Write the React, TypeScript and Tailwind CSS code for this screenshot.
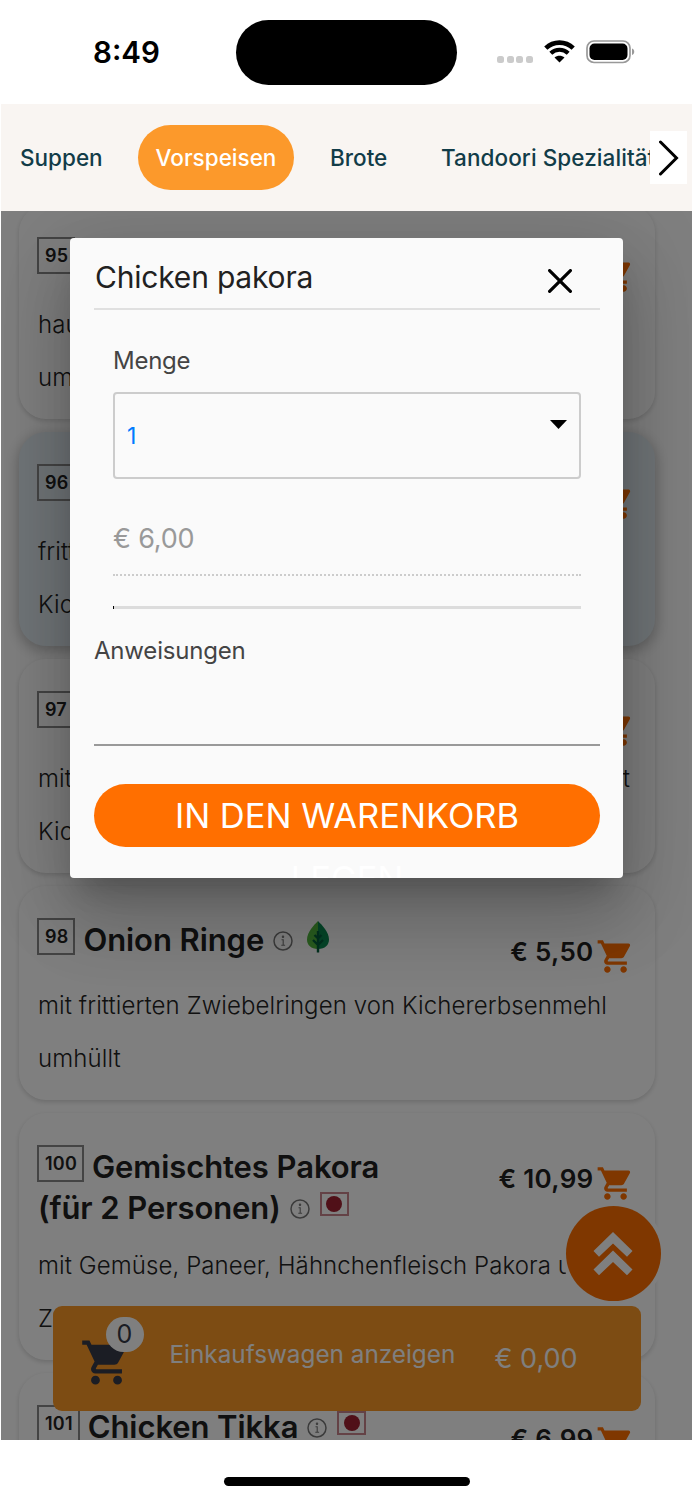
import React from "react";
import { MdShoppingCart } from "react-icons/md";

type Marker = "leaf" | "meat";

interface Dish {
  nr: string;
  title: string[];
  text: React.ReactNode[];
  price: string;
  marker?: Marker;
  highlighted?: boolean;
}

const categories = [
  { name: "Suppen", className: "w-[83px] ml-[19px]" },
  { name: "Vorspeisen", active: true, className: "" },
  { name: "Brote", className: "w-[58px] ml-[36px]" },
  { name: "Tandoori Spezialitäten", className: "ml-[53px] tracking-[0.070px]" },
];

const dishes: Dish[] = [
  { nr: "95", title: [], text: ["hausgemacht", "umhüllt"], price: "" },
  { nr: "96", title: [], text: ["frittiert", "Kichererbsenmehl"], price: "", highlighted: true },
  {
    nr: "97",
    title: [],
    text: [
      <span key="a" className="flex w-[592px] justify-between"><span>mit</span><span>mit</span></span>,
      "Kichererbsenmehl",
    ],
    price: "",
  },
  {
    nr: "98",
    title: ["Onion Ringe"],
    text: ["mit frittierten Zwiebelringen von Kichererbsenmehl", "umhüllt"],
    price: "€ 5,50",
    marker: "leaf",
  },
  {
    nr: "100",
    title: ["Gemischtes Pakora", "(für 2 Personen)"],
    text: ["mit Gemüse, Paneer, Hähnchenfleisch Pakora und", "Zwiebeln"],
    price: "€ 10,99",
    marker: "meat",
  },
  { nr: "101", title: ["Chicken Tikka"], text: ["", ""], price: "€ 6,99", marker: "meat" },
];

function InfoIcon() {
  return (
    <svg className="h-5 w-5 shrink-0" viewBox="0 0 20 20" fill="none" stroke="#777" strokeWidth="1.5">
      <circle cx="10" cy="10" r="9" />
      <path d="M8.500 8.700H10.200V14.300M8.300 14.300H12.100" strokeWidth="1.100" />
      <circle cx="10" cy="5.700" r="0.500" fill="#777" />
    </svg>
  );
}

function LeafIcon() {
  return (
    <svg className="-mt-2 ml-[14px] h-[32px] w-[22px] shrink-0" viewBox="0 0 22 32">
      <path d="M11 0C7 4 0 11 0 18.500C0 24 4 28 11 28Z" fill="#52b83e" />
      <path d="M11 0C15 4 22 11 22 18.500C22 24 18 28 11 28Z" fill="#0a8a50" />
      <path d="M11 10V31.500M11 17.500L7.500 14M11 17.500L14.500 14M11 24L6 19M11 24L16 19" fill="none" stroke="#04603c" strokeWidth="2.400" />
    </svg>
  );
}

function MeatIcon() {
  return (
    <span className="-mt-[9px] ml-[10px] flex h-6 w-[29px] shrink-0 items-center justify-center border-2 border-[#c8848c]">
      <span className="h-4 w-4 rounded-full bg-[#a02030]" />
    </span>
  );
}

function DishCard({ dish }: { dish: Dish }) {
  const lines = dish.title.length ? dish.title : [""];
  return (
    <article
      className={
        dish.highlighted
          ? "w-[636px] shrink-0 rounded-[27px] bg-[#e0ebf1] pt-[34px] pr-[17px] pb-[15px] pl-[19px] shadow-[0_4px_14px_1px_rgba(0,0,0,0.25)]"
          : "w-[636px] shrink-0 rounded-[27px] bg-white pt-[34px] pr-[17px] pb-[15px] pl-[19px] shadow-[0_2px_5px_0_rgba(0,0,0,0.16)]"
      }
    >
      <div className="mb-[10px] flex min-h-[49px] items-start justify-between">
        <h3 className="text-[31px] font-semibold tracking-[-0.080px] text-[#212121]">
          {lines.map((line, i) => (
            <span key={i} className="flex h-[41px] items-center whitespace-nowrap">
              {i === 0 && (
                <span className="-mt-2 mr-2 -ml-px flex h-[37px] items-center border-2 border-[#888] pr-[5px] pl-[6px] text-[18px] tracking-[0.2px] text-[#222]">
                  {dish.nr}
                </span>
              )}
              {line}
              {i === lines.length - 1 && line && (
                <>
                  <span className="w-[9px]" />
                  <InfoIcon />
                  {dish.marker === "leaf" ? <LeafIcon /> : <MeatIcon />}
                </>
              )}
            </span>
          ))}
        </h3>
        <div className="mr-[3px] flex h-[49px] pt-[12px]">
          <span className="mr-[2.500px] pt-px text-[26px] leading-[38px] font-semibold tracking-[0.300px] whitespace-nowrap text-[#212121]">{dish.price}</span>
          <MdShoppingCart className="mt-[5px] h-[39px] w-[39px] text-[#ff6f00]" />
        </div>
      </div>
      <div className="text-[24px] leading-[54px] font-light tracking-[0.090px] whitespace-nowrap text-[#222]">
        {dish.text.map((t, i) => (
          <div key={i} className="h-[53px]">{t}</div>
        ))}
      </div>
    </article>
  );
}

function StatusBar() {
  return (
    <div className="flex h-[104px] shrink-0 items-start bg-white text-black">
      <span className="mt-[32px] ml-[93px] w-[143px] text-[29.500px] leading-[40px] font-semibold">8:49</span>
      <div className="mt-5 h-[65px] w-[221px] rounded-full bg-black" />
      <div className="mt-14 ml-10 flex gap-[2.500px]">
        {[0, 1, 2, 3].map((n) => (
          <span key={n} className="h-[7px] w-[7px] rounded-[2.500px] bg-[#cbcbcb]" />
        ))}
      </div>
      <svg className="mt-10 ml-[11px] h-[23px] w-[31px]" viewBox="0 0 31 23">
        <path d="M1.800 8.200C9.500 0.800 21.500 0.800 29.200 8.200" fill="none" stroke="#000" strokeWidth="4.600" />
        <path d="M6.800 13.200C11.700 8.600 19.300 8.600 24.200 13.200" fill="none" stroke="#000" strokeWidth="4.200" />
        <path d="M15.500 22.500L10.500 17.500C13.200 15.200 17.800 15.200 20.500 17.500Z" fill="#000" />
      </svg>
      <svg className="mt-10 ml-[11px] h-6 w-[50px]" viewBox="0 0 50 24">
        <rect x="1" y="1" width="43" height="21.500" rx="7" fill="none" stroke="#999" strokeWidth="1.700" />
        <rect x="3.500" y="3.500" width="38" height="16.500" rx="5" fill="#000" />
        <path d="M46 8.500C49 9 49 14.500 46 15Z" fill="#999" />
      </svg>
    </div>
  );
}

function CategoryBar() {
  return (
    <nav className="relative mx-px flex h-[107px] shrink-0 items-center overflow-hidden bg-[#f9f5f2] text-[22.500px] font-medium whitespace-nowrap text-[#123c48]">
      {categories.map((c) =>
        c.active ? (
          <span key={c.name} className="ml-[35px] flex h-[65px] w-[156px] shrink-0 items-center justify-center rounded-full bg-[#fc992b] pt-px text-white">
            {c.name}
          </span>
        ) : (
          <span key={c.name} className={c.className + " shrink-0 pt-px"}>{c.name}</span>
        )
      )}
      <button className="absolute top-[27px] right-[5px] flex h-[53px] w-[37px] items-center justify-center bg-white">
        <svg className="h-9 w-5" viewBox="0 0 20 36" fill="none" stroke="#000" strokeWidth="3">
          <path d="M1.500 2L17.500 18L1.500 34" strokeLinecap="round" />
        </svg>
      </button>
    </nav>
  );
}

function AddToCartDialog() {
  return (
    <div className="mt-[27px] h-[640px] w-[553px] overflow-hidden rounded-[4px] bg-[#fafafa] pr-[23px] pl-6 shadow-[0_20px_27px_-12px_rgba(0,0,0,0.2),0_43px_67px_5px_rgba(0,0,0,0.14),0_16px_82px_14px_rgba(0,0,0,0.12)]">
      <header className="flex h-[72px] items-start justify-between border-b-2 border-[#e0e0e0]">
        <h2 className="mt-[19px] ml-px text-[30px] leading-[40px] tracking-[-0.200px] text-[#212121]">Chicken pakora</h2>
        <svg className="mt-[31px] mr-7 h-6 w-6" viewBox="0 0 24 24" stroke="#000" strokeWidth="3.200" strokeLinecap="round">
          <path d="M1.600 1.600L22.400 22.400M22.400 1.600L1.600 22.400" />
        </svg>
      </header>
      <div className="mx-[19px]">
        <div className="pt-[35px] text-[24px] leading-[32px] tracking-[-0.250px] text-[#444]">Menge</div>
        <div className="mt-[15px] flex h-[87px] items-center justify-between rounded-[4px] border-2 border-[#ccc] pr-[12px] pl-3">
          <span className="pt-0.5 text-[23px] text-[#007aff]">1</span>
          <svg className="mb-[23px] h-[9px] w-[17px]" viewBox="0 0 17 9">
            <path d="M0 0H17L8.500 9Z" />
          </svg>
        </div>
        <div className="mt-[40px] h-[57px] border-b-2 border-dotted border-[#ccc] text-[27px] leading-[40px] tracking-[-0.200px] text-[#999]">€ 6,00</div>
        <div className="mt-[30px] h-[3px] border-l border-black bg-[#dcdcdc]" />
      </div>
      <div className="mt-[26px] h-[111px] border-b-2 border-[#999] text-[24px] leading-[32px] tracking-[-0.200px] text-[#444]">Anweisungen</div>
      <button className="mt-[38px] block h-[63px] w-full rounded-full bg-[#ff6f00] px-10 text-center text-[34.500px] leading-[63px] text-white">
        <span className="block h-[63px]">IN DEN WARENKORB LEGEN</span>
      </button>
    </div>
  );
}

export default function App() {
  return (
    <main className="flex h-[1500px] w-[693px] flex-col overflow-hidden bg-white font-['Inter','Liberation_Sans',sans-serif]">
      <StatusBar />
      <CategoryBar />

      <section className="relative mx-px h-[1229px] shrink-0 overflow-hidden bg-white">
        <div className="-mt-[6px] ml-[18px] flex flex-col gap-[13px]">
          {dishes.map((d) => (
            <DishCard key={d.nr} dish={d} />
          ))}
        </div>

        {/* back to top */}
        <button className="absolute top-[995px] left-[564.500px] flex h-[95px] w-[95px] items-center justify-center rounded-full bg-[#ff6f00] shadow-[0_0_0_4px_#fff]">
          <svg className="h-[44px] w-10" viewBox="0 0 40 44" fill="#fff">
            <path d="M20 0L39.500 19L34 24.700L20 11.500L6 24.700L0.500 19Z" />
            <path d="M20 18.500L39.500 37.500L34 43.200L20 30L6 43.200L0.500 37.500Z" />
          </svg>
        </button>

        {/* cart summary */}
        <div className="absolute top-[1095px] left-[51.500px] flex h-[105px] w-[588px] items-center rounded-[9px] bg-[#fb9827] text-white">
          <div className="relative ml-[27px] h-full w-[90px]">
            <MdShoppingCart className="mt-[30px] h-[53px] w-[53px] text-[#363a48]" />
            <span className="absolute top-[11px] left-[26px] flex h-[35px] w-[38px] items-center justify-center rounded-full bg-white text-[25px] text-[#363a48]">0</span>
          </div>
          <span className="-mt-[9px] w-[325px] text-[24.300px] whitespace-nowrap">Einkaufswagen anzeigen</span>
          <span className="pt-px text-[27px] whitespace-nowrap">€ 0,00</span>
        </div>

        <div className="absolute inset-0 flex items-start justify-center bg-black/50">
          <AddToCartDialog />
        </div>
      </section>

      <div className="flex h-[60px] shrink-0 justify-center">
        <div className="mt-[37px] h-[9px] w-[246px] rounded-full bg-black" />
      </div>
    </main>
  );
}
